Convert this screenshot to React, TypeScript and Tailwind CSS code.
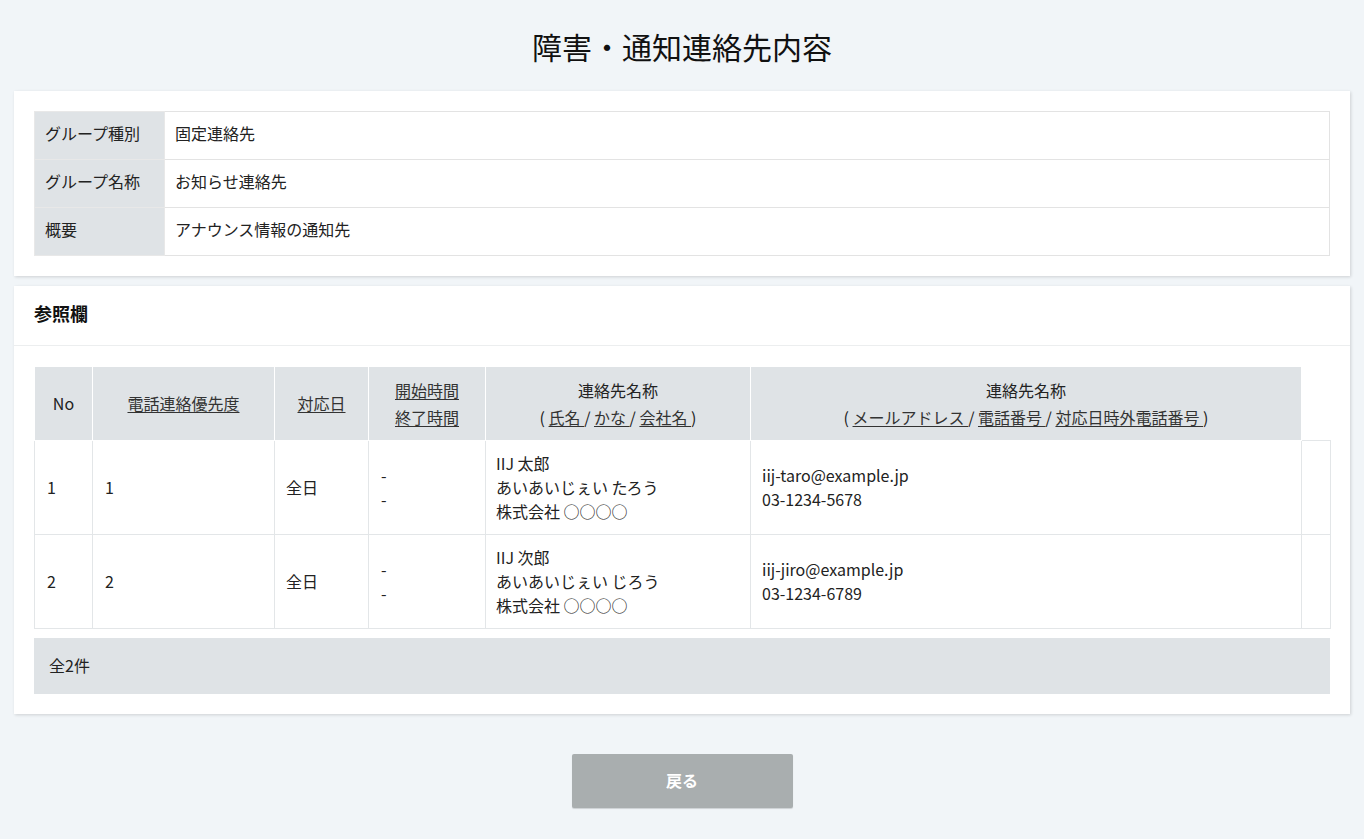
import React from 'react';

const font = "font-['Meiryo','Noto_Sans_CJK_JP',sans-serif]";

const infoRows = [
    { label: 'グループ種別', value: '固定連絡先' },
    { label: 'グループ名称', value: 'お知らせ連絡先' },
    { label: '概要', value: 'アナウンス情報の通知先' },
];

const contacts = [
    {
        no: 1,
        priority: 1,
        day: '全日',
        name: 'IIJ 太郎',
        kana: 'あいあいじぇい たろう',
        company: '株式会社 ○○○○',
        mail: 'iij-taro@example.jp',
        tel: '03-1234-5678',
    },
    {
        no: 2,
        priority: 2,
        day: '全日',
        name: 'IIJ 次郎',
        kana: 'あいあいじぇい じろう',
        company: '株式会社 ○○○○',
        mail: 'iij-jiro@example.jp',
        tel: '03-1234-6789',
    },
];

function Link({ children }: { children: React.ReactNode }) {
    return <a className="underline underline-offset-2 cursor-pointer text-[#333]">{children}</a>;
}

export default function App() {
    const th = 'bg-[#dfe3e6] border border-white font-normal text-center align-middle';
    const td = 'border border-[#e3e6e8] px-3 pb-[2px] align-middle text-left';

    return (
        <div className={`min-h-screen bg-[#f1f5f8] px-[14px] pb-[31px] text-[16px] text-[#222] ${font}`}>
            {/* タイトル */}
            <h1 className="h-[91px] flex items-center justify-center text-[30px] leading-none text-[#111]">
                障害・通知連絡先内容
            </h1>

            {/* グループ情報 */}
            <section className="bg-white p-5 shadow-[1px_1px_3px_rgba(0,0,0,0.15)]">
                <table className="w-full border-collapse border border-[#e3e3e3]">
                    <tbody>
                        {infoRows.map((r) => (
                            <tr key={r.label} className="h-12">
                                <th className="w-[130px] bg-[#dfe3e6] border border-[#e8e8e8] px-[10px] pb-[5px] text-left font-normal">
                                    {r.label}
                                </th>
                                <td className="border border-[#e3e3e3] px-[10px] pb-[5px]">{r.value}</td>
                            </tr>
                        ))}
                    </tbody>
                </table>
            </section>

            {/* 参照欄 */}
            <section className="mt-[10px] bg-white shadow-[1px_1px_3px_rgba(0,0,0,0.15)]">
                <div className="h-[60px] px-5 pb-[5px] flex items-center border-b border-[#eceeef]">
                    <h2 className="text-[18px] font-bold text-[#111]">参照欄</h2>
                </div>

                <div className="p-5">
                    <table className="w-full border-collapse table-fixed">
                        <colgroup>
                            <col className="w-[58px]" />
                            <col className="w-[182px]" />
                            <col className="w-[94px]" />
                            <col className="w-[117px]" />
                            <col className="w-[265px]" />
                            <col className="w-[551px]" />
                            <col className="w-[29px]" />
                        </colgroup>
                        <thead>
                            <tr className="h-[74px] leading-[27px]">
                                <th className={th}>No</th>
                                <th className={th}><Link>電話連絡優先度</Link></th>
                                <th className={th}><Link>対応日</Link></th>
                                <th className={th}>
                                    <div><Link>開始時間</Link></div>
                                    <div><Link>終了時間</Link></div>
                                </th>
                                <th className={th}>
                                    <div>連絡先名称</div>
                                    <div>
                                        ( <Link>氏名 </Link>/ <Link>かな </Link>/ <Link>会社名 </Link>)
                                    </div>
                                </th>
                                <th className={th}>
                                    <div>連絡先名称</div>
                                    <div>
                                        ( <Link>メールアドレス </Link>/ <Link>電話番号 </Link>/ <Link>対応日時外電話番号 </Link>)
                                    </div>
                                </th>
                                <th className="border-b border-[#e3e6e8]"></th>
                            </tr>
                        </thead>
                        <tbody className="leading-6">
                            {contacts.map((c) => (
                                <tr key={c.no} className="h-[94px]">
                                    <td className={td}>{c.no}</td>
                                    <td className={td}>{c.priority}</td>
                                    <td className={`${td} px-[11px]`}>{c.day}</td>
                                    <td className={td}>
                                        <div>-</div>
                                        <div>-</div>
                                    </td>
                                    <td className={`${td} px-[10px]`}>
                                        <div>{c.name}</div>
                                        <div>{c.kana}</div>
                                        <div>{c.company}</div>
                                    </td>
                                    <td className={`${td} px-[11px]`}>
                                        <div>{c.mail}</div>
                                        <div>{c.tel}</div>
                                    </td>
                                    <td className={td}></td>
                                </tr>
                            ))}
                        </tbody>
                    </table>

                    <div className="mt-[9px] h-14 bg-[#dfe3e6] px-[15px] pb-[3px] flex items-center">全2件</div>
                </div>
            </section>

            {/* 戻るボタン */}
            <div className="mt-10 flex justify-center">
                <button className="w-[221px] h-[54px] rounded-[2px] bg-[#a9aeaf] text-white font-bold text-[16px] pb-[3px] shadow-[0_1px_1px_rgba(0,0,0,0.15)]">
                    戻る
                </button>
            </div>
        </div>
    );
}
